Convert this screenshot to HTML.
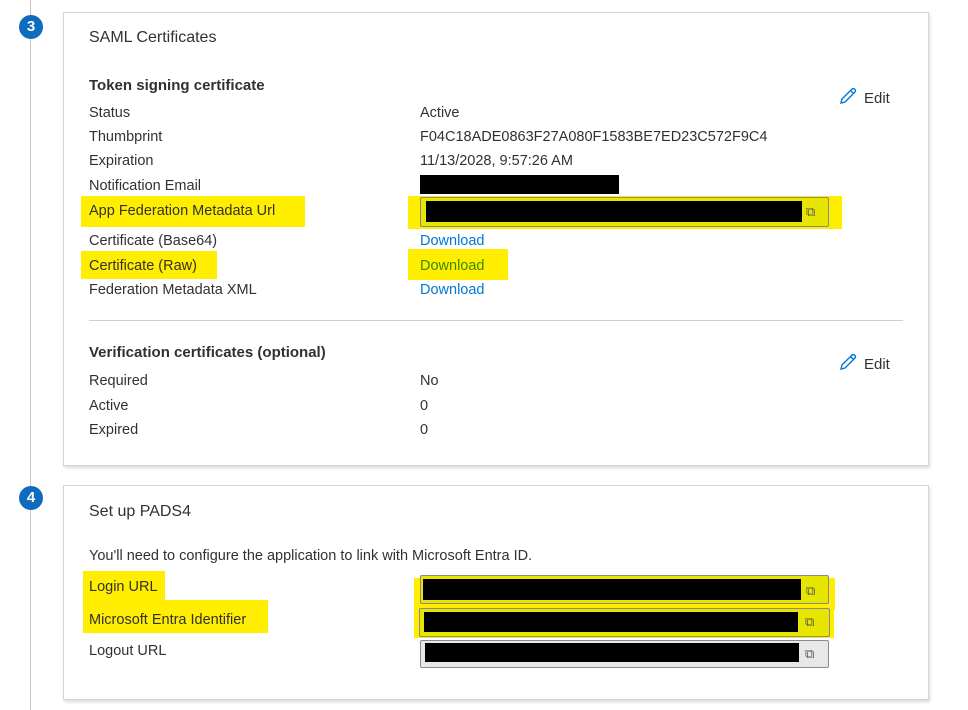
<!DOCTYPE html>
<html><head><style>
body{margin:0;width:968px;height:710px;background:#fff;position:relative;overflow:hidden;font-family:"Segoe UI","Liberation Sans",sans-serif;color:#323130;font-size:14.5px}
.a{position:absolute;white-space:nowrap;line-height:18px}
.vl{position:absolute;left:30px;top:0;width:1px;height:710px;background:#c8c6c4}
.c{position:absolute;width:24px;height:24px;border-radius:50%;background:#0f6cbd;color:#fff;font-weight:bold;font-size:15px;text-align:center;line-height:24px;left:19px}
.card{position:absolute;left:63px;width:864px;background:#fff;border:1px solid #d6d6d6;box-shadow:1px 2px 3px rgba(0,0,0,.15)}
.y{position:absolute;background:#ffee00}
.blk{position:absolute;background:#000}
.box{position:absolute;border:1px solid #8a8a8a;border-radius:2px}
.lnk{color:#0078d4}
.cp{position:absolute;font-size:13px;color:#555}
.ed{position:absolute;font-size:15px;white-space:nowrap}
.ed svg{vertical-align:-3px;margin-right:6px}
</style></head><body>
<div class="vl"></div>
<div class="c" style="top:15px">3</div>
<div class="c" style="top:486px">4</div>
<div class="card" style="top:12px;height:452px"></div>
<div class="card" style="top:485px;height:213px"></div>

<div class="a" style="left:89px;top:29px;font-size:16px">SAML Certificates</div>
<div class="a" style="left:89px;top:77px;font-weight:bold;font-size:15px">Token signing certificate</div>
<div class="y" style="left:81px;top:196px;width:224px;height:31px"></div>
<div class="y" style="left:81px;top:251px;width:136px;height:28px"></div>
<div class="y" style="left:408px;top:249px;width:100px;height:31px"></div>
<div class="y" style="left:408px;top:196px;width:434px;height:33px"></div>
<div class="a" style="left:89px;top:104px">Status</div>
<div class="a" style="left:89px;top:128px">Thumbprint</div>
<div class="a" style="left:89px;top:152px">Expiration</div>
<div class="a" style="left:89px;top:177px">Notification Email</div>
<div class="a" style="left:89px;top:202px">App Federation Metadata Url</div>
<div class="a" style="left:89px;top:232px">Certificate (Base64)</div>
<div class="a" style="left:89px;top:257px">Certificate (Raw)</div>
<div class="a" style="left:89px;top:281px">Federation Metadata XML</div>
<div class="a" style="left:420px;top:104px">Active</div>
<div class="a" style="left:420px;top:128px">F04C18ADE0863F27A080F1583BE7ED23C572F9C4</div>
<div class="a" style="left:420px;top:152px">11/13/2028, 9:57:26 AM</div>
<div class="blk" style="left:420px;top:175px;width:199px;height:19px"></div>
<div class="box" style="left:420px;top:197px;width:407px;height:28px;background:#e6e600"></div>
<div class="blk" style="left:426px;top:201px;width:376px;height:21px"></div>
<div class="cp" style="left:806px;top:204px">⧉</div>
<div class="a lnk" style="left:420px;top:232px">Download</div>
<div class="a" style="left:420px;top:257px;color:#3a8a00">Download</div>
<div class="a lnk" style="left:420px;top:281px">Download</div>
<div class="ed" style="left:838px;top:86px"><svg width="20" height="20" viewBox="0 0 20 20"><path d="M3 17 L4 13 L14 3 Q15.5 2 17 3.5 Q18 5 17 6 L7 16 Z M12.5 4.5 L15.5 7.5" fill="none" stroke="#0078d4" stroke-width="1.4"/></svg>Edit</div>
<div style="position:absolute;left:89px;top:320px;width:814px;height:1px;background:#d0d0d0"></div>
<div class="a" style="left:89px;top:344px;font-weight:bold;font-size:15px">Verification certificates (optional)</div>
<div class="ed" style="left:838px;top:352px"><svg width="20" height="20" viewBox="0 0 20 20"><path d="M3 17 L4 13 L14 3 Q15.5 2 17 3.5 Q18 5 17 6 L7 16 Z M12.5 4.5 L15.5 7.5" fill="none" stroke="#0078d4" stroke-width="1.4"/></svg>Edit</div>
<div class="a" style="left:89px;top:372px">Required</div>
<div class="a" style="left:89px;top:397px">Active</div>
<div class="a" style="left:89px;top:421px">Expired</div>
<div class="a" style="left:420px;top:372px">No</div>
<div class="a" style="left:420px;top:397px">0</div>
<div class="a" style="left:420px;top:421px">0</div>

<div class="a" style="left:89px;top:503px;font-size:16px">Set up PADS4</div>
<div class="a" style="left:89px;top:547px">You'll need to configure the application to link with Microsoft Entra ID.</div>
<div class="y" style="left:83px;top:571px;width:82px;height:30px"></div>
<div class="y" style="left:83px;top:600px;width:185px;height:33px"></div>
<div class="y" style="left:414px;top:578px;width:421px;height:32px"></div>
<div class="y" style="left:414px;top:608px;width:420px;height:30px"></div>
<div class="a" style="left:89px;top:578px">Login URL</div>
<div class="a" style="left:89px;top:611px">Microsoft Entra Identifier</div>
<div class="a" style="left:89px;top:642px">Logout URL</div>
<div class="box" style="left:420px;top:575px;width:407px;height:27px;background:#e6e600"></div>
<div class="blk" style="left:423px;top:579px;width:378px;height:21px"></div>
<div class="cp" style="left:806px;top:583px">⧉</div>
<div class="box" style="left:419px;top:608px;width:409px;height:27px;background:#e6e600"></div>
<div class="blk" style="left:424px;top:612px;width:374px;height:20px"></div>
<div class="cp" style="left:805px;top:614px">⧉</div>
<div class="box" style="left:420px;top:640px;width:407px;height:26px;background:#e8e8e8"></div>
<div class="blk" style="left:425px;top:643px;width:374px;height:19px"></div>
<div class="cp" style="left:805px;top:646px">⧉</div>
</body></html>
